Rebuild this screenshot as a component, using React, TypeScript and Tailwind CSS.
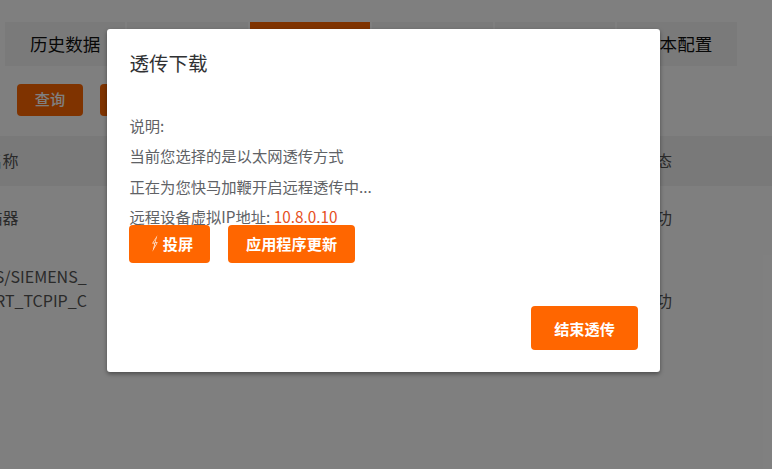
import React from "react";

const font = { fontFamily: '"Noto Sans CJK SC", "Noto Sans", sans-serif' };

function Tab({ label, active }: { label: string; active?: boolean }) {
  return (
    <div
      className={
        active
          ? "w-[120.4px] h-[44px] flex items-center justify-center text-[17.6px] text-white bg-[#ff6600]"
          : "w-[120.4px] h-[44px] flex items-center justify-center text-[17.6px] text-[#111111] bg-[#f5f5f5]"
      }
    >
      {label}
    </div>
  );
}

function Bolt() {
  return (
    <svg width="8" height="17" viewBox="0 0 8 17" className="mr-[4px]" aria-hidden="true">
      <path d="M6.4 0.2 L1 8.6 L3.4 8.6 L1.4 16.8 L6.8 7.2 L4.4 7.2 L6.4 0.2 Z M5.2 3 L2.2 7.8 L4.4 7.8 L3.2 12.6 L5.6 8 L3.4 8 Z" fill="#ffffff" fillRule="evenodd" fillOpacity="0.9" />
    </svg>
  );
}

export default function App() {
  return (
    <div className="relative w-[772px] h-[469px] overflow-hidden bg-white" style={font}>
      {/* page behind the dialog */}
      <div className="flex gap-[2px] pt-[22px] pl-[5px]">
        <Tab label="历史数据" />
        <Tab label="实时数据" />
        <Tab label="透传下载" active />
        <Tab label="网关配置" />
        <Tab label="设备配置" />
        <Tab label="基本配置" />
      </div>
      <div className="flex gap-[17px] pt-[18px] pl-[17px]">
        <div className="w-[66px] h-[32px] pb-[3px] rounded-[4px] bg-[#ff6600] text-white text-[15.2px] font-medium flex items-center justify-center">查询</div>
        <div className="w-[66px] h-[32px] pb-[3px] rounded-[4px] bg-[#ff6600] text-white text-[15.2px] font-medium flex items-center justify-center">新增</div>
      </div>
      <div className="mt-[20px] h-[50px] pb-[2px] bg-[#f2f2f2] flex items-center justify-between text-[16px] text-[#555555]">
        <span className="-ml-[13.5px]">名称</span>
        <span className="mr-[100px]">状态</span>
      </div>
      <div className="h-[64px] pt-[19px] flex items-start justify-between text-[16px] leading-[24px] text-[#555555]">
        <span className="-ml-[29.5px]">扫描器</span>
        <span className="mr-[100px]">成功</span>
      </div>
      <div className="pt-[14px] flex items-end justify-between text-[16px] leading-[24px] text-[#555555]">
        <span className="-ml-[10px]">
          <span className="block">IS/SIEMENS_</span>
          <span className="block -ml-[17px]">PORT_TCPIP_C</span>
        </span>
        <span className="mr-[100px]">成功</span>
      </div>

      {/* overlay */}
      <div className="absolute inset-0 bg-black/50 pl-[107px] pt-[29px]">
        <div className="w-[553px] h-[343px] bg-white rounded-[3px] shadow-[0_2px_4px_rgba(0,0,0,0.4)] flex flex-col">
          <div className="pl-[22.5px] pt-[19px] text-[19.5px] leading-[30px] text-[#303133]">透传下载</div>
          <div className="pl-[22.5px] pt-[32px] text-[15.3px] leading-[30.4px] text-[#606266]">
            <p>说明:</p>
            <p>当前您选择的是以太网透传方式</p>
            <p>正在为您快马加鞭开启远程透传中...</p>
            <p>
              远程设备虚拟IP地址: <span className="text-[#e6501e]">10.8.0.10</span>
            </p>
          </div>
          <div className="pl-[22px] flex gap-[18px] -mt-[7px]">
            <button className="w-[81px] h-[38px] pl-[5px] rounded-[4px] bg-[#ff6600] text-white text-[15.2px] font-bold flex items-center justify-center">
              <Bolt />
              投屏
            </button>
            <button className="w-[127px] h-[38px] rounded-[4px] bg-[#ff6600] text-white text-[15.2px] font-bold flex items-center justify-center">
              应用程序更新
            </button>
          </div>
          <div className="mt-auto pr-[22px] pb-[22px] flex justify-end">
            <button className="w-[107px] h-[44px] rounded-[4px] bg-[#ff6600] text-white text-[15.2px] font-bold flex items-center justify-center">
              结束透传
            </button>
          </div>
        </div>
      </div>
    </div>
  );
}
